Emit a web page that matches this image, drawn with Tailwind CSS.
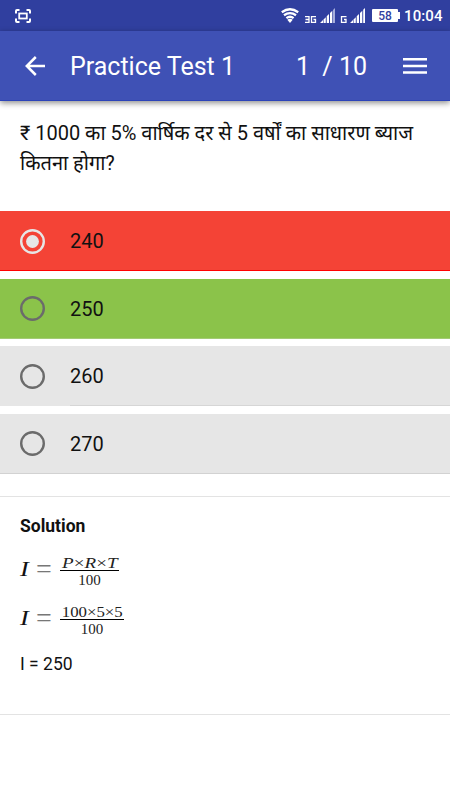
<!DOCTYPE html>
<html lang="hi">
<head>
    <meta charset="UTF-8">
    <meta name="viewport" content="width=device-width, initial-scale=1.0">
    <title>Practice Test 1</title>
    <script src="https://cdn.jsdelivr.net/npm/@tailwindcss/browser@4"></script>
</head>
<body class="bg-white text-[#111] h-[800px] overflow-hidden font-[Roboto,'Noto_Sans',sans-serif]">

    <!-- Status bar -->
    <div class="h-[31px] bg-[#303f9f] flex items-center text-white pl-[15px] pr-2">
        <svg class="w-4 h-[14px]" viewBox="0 0 16 14" fill="none" stroke="#fff" stroke-width="2">
            <path d="M1 4.5V2q0-1 1-1h2.5M11.500 1H14q1 0 1 1v2.500M15 9.500V12q0 1-1 1h-2.500M4.500 13H2q-1 0-1-1V9.500"/>
            <rect x="4.200" y="4.500" width="7.600" height="5" stroke-width="1.800"/>
        </svg>
        <div class="ml-auto flex items-center">
            <svg class="w-[86px] h-4" viewBox="281 8 86 16" fill="none">
                <g stroke="#fff" stroke-width="2.300">
                    <path d="M281.800 12.300q8.200-6 16.400 0"/>
                    <path d="M284 15.300q6-4.400 12 0"/>
                    <path d="M286.400 18.100q3.600-2.700 7.200 0"/>
                </g>
                <path d="M287.300 19.700q2.700-2 5.400 0L290 23z" fill="#fff"/>
                <path d="M305 16.700h4v5.600h-4M305.500 19.500h3.500M316 16.700h-4.500v5.600h4v-2.800h-2" stroke="#fff" stroke-width="1.300"/>
                <path d="M320 23l3-3v3zM323.500 19.500l2.300-2.300V23h-2.300zM326.700 16.300l2.300-2.300v9h-2.300zM330 13l2.300-2.300V23H330z" fill="#fff"/>
                <path d="M333 10l2-2v15h-2z" fill="#a6aedb"/>
                <path d="M346.500 16.700h-5v5.600h4.500v-2.800h-2" stroke="#fff" stroke-width="1.300"/>
                <path d="M350 23l3-3v3zM353.500 19.500l2.300-2.300V23h-2.300zM356.700 16.300l2.300-2.300v9h-2.300zM360 13l2.300-2.300V23H360zM363.200 9.800l1.800-1.800v15h-1.800z" fill="#fff"/>
            </svg>
            <div class="ml-[5px] w-[26px] h-[13px] rounded-[1px] bg-white text-[#303f9f] text-[12px] leading-[14px] font-medium text-center">58</div>
            <div class="w-[2px] h-[7px] bg-white"></div>
            <div class="ml-1 pt-px text-[15px] leading-4 font-medium tracking-[0.1px] w-[38px] whitespace-nowrap">10:04</div>
        </div>
    </div>

    <!-- App bar -->
    <header class="relative h-[70px] bg-[#3f51b5] border-b border-[#2c43b8] shadow-[0_2px_6px_rgba(0,0,0,0.45)] flex items-center text-white text-[25px] pl-[25px] pr-[23px]">
        <svg class="w-5 h-5" viewBox="0 0 20 20" fill="none" stroke="#fff" stroke-width="2.500">
            <path d="M20 10H2M10.800 1L1.800 10l9 9"/>
        </svg>
        <h1 class="ml-[25px] pt-[2px] whitespace-pre">Practice Test 1</h1>
        <div class="ml-auto pt-[2px] whitespace-pre">1  / 10</div>
        <svg class="ml-9 w-6 h-4" viewBox="0 0 24 16" fill="#fff">
            <path d="M0 0h24v2.500H0zM0 6.700h24v2.500H0zM0 13.300h24v2.500H0z"/>
        </svg>
    </header>

    <!-- Question -->
    <div class="h-[110px] px-5 pt-[17px] text-[20px] leading-[30px]">
        <p class="whitespace-nowrap tracking-[-0.02px]">₹ 1000 का 5% वार्षिक दर से 5 वर्षों का साधारण ब्याज<br>कितना होगा?</p>
    </div>

    <!-- Options -->
    <div class="flex flex-col gap-[7.600px] text-[20px]">
        <div class="h-[60px] bg-[#f44336] border-b border-[#ff0000] flex items-center pt-px pl-5">
            <svg class="w-[25px] h-[25px]" viewBox="0 0 25 25" fill="none"><circle cx="12.500" cy="12.500" r="11.300" stroke="#e6e6e6" stroke-width="2.400"/><circle cx="12.500" cy="12.500" r="6.400" fill="#e6e6e6"/></svg>
            <span class="ml-[25px]">240</span>
        </div>
        <div class="h-[60px] bg-[#8bc34a] border-b border-[#a3cb74] flex items-center pt-px pl-5">
            <svg class="w-[25px] h-[25px]" viewBox="0 0 25 25" fill="none"><circle cx="12.500" cy="12.500" r="11.300" stroke="#6b6b6b" stroke-width="2.400"/></svg>
            <span class="ml-[25px]">250</span>
        </div>
        <div class="h-[60px] bg-[#e6e6e6] flex items-center pl-5">
            <svg class="w-[25px] h-[25px]" viewBox="0 0 25 25" fill="none"><circle cx="12.500" cy="12.500" r="11.300" stroke="#6b6b6b" stroke-width="2.400"/></svg>
            <span class="ml-[25px] flex-1 self-stretch flex items-center border-b border-[#d6d6d6]">260</span>
        </div>
        <div class="h-[60px] bg-[#e6e6e6] border-b border-[#d2d2d2] flex items-center pt-px pl-5">
            <svg class="w-[25px] h-[25px]" viewBox="0 0 25 25" fill="none"><circle cx="12.500" cy="12.500" r="11.300" stroke="#6b6b6b" stroke-width="2.400"/></svg>
            <span class="ml-[25px]">270</span>
        </div>
    </div>

    <!-- Solution -->
    <section class="mt-[22px] h-[219px] border-y border-[#e3e3e3] px-5 pt-[19px]">
        <h2 class="text-[17.500px] leading-5 font-bold">Solution</h2>
        <div class="mt-5 h-[31px] flex items-start font-['Liberation_Serif',serif]">
            <i class="w-4 pt-[1px] text-[22px] leading-6"><span class="inline-block origin-left scale-x-[1.2]">I</span></i>
            <span class="w-[24px] pt-[3px] text-[28px] leading-5 text-[#777]">=</span>
            <div class="w-[59px] text-center text-[15px] text-[#222]">
                <div class="h-[15px] leading-[14px] border-b border-black whitespace-nowrap"><span class="inline-block scale-x-[1.27]"><i>P</i>×<i>R</i>×<i>T</i></span></div>
                <div class="leading-[19px]">100</div>
            </div>
        </div>
        <div class="mt-[18px] h-[31px] flex items-start font-['Liberation_Serif',serif]">
            <i class="w-4 pt-[1px] text-[22px] leading-6"><span class="inline-block origin-left scale-x-[1.2]">I</span></i>
            <span class="w-[24px] pt-[3px] text-[28px] leading-5 text-[#777]">=</span>
            <div class="w-[64px] text-center text-[15px] text-[#222]">
                <div class="h-[15px] leading-[14px] border-b border-black whitespace-nowrap"><span class="inline-block scale-x-[1.12]">100×5×5</span></div>
                <div class="leading-[19px]">100</div>
            </div>
        </div>
        <p class="mt-[18px] text-[17.500px] leading-5">I = 250</p>
    </section>
</body>
</html>
